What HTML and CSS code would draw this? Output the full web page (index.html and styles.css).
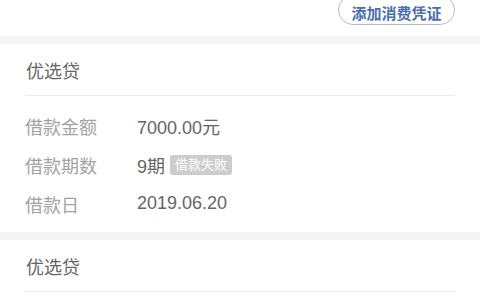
FILE: index.html
```html
<!DOCTYPE html>
<html lang="zh-CN">
<head>
<meta charset="utf-8">
<link rel="stylesheet" href="styles.css">
</head>
<body>
<div class="page">
  <div class="topbar">
    <button class="add-btn">添加消费凭证</button>
  </div>
  <div class="band"></div>
  <section class="card">
    <div class="card-title">优选贷</div>
    <div class="rows">
      <div class="row"><span class="label">借款金额</span><span class="value">7000.00元</span></div>
      <div class="row"><span class="label">借款期数</span><span class="value">9期</span><span class="tag">借款失败</span></div>
      <div class="row"><span class="label">借款日</span><span class="value">2019.06.20</span></div>
    </div>
  </section>
  <div class="band"></div>
  <section class="card">
    <div class="card-title">优选贷</div>
  </section>
</div>
</body>
</html>
```

FILE: styles.css
```css
html, body {
  margin: 0;
  padding: 0;
  background: #ffffff;
}
body {
  font-family: "Liberation Sans", "Noto Sans CJK SC", sans-serif;
  width: 480px;
  height: 300px;
  overflow: hidden;
}
.page {
  display: flex;
  flex-direction: column;
}
.topbar {
  height: 36px;
  display: flex;
  justify-content: flex-end;
  align-items: flex-start;
  padding-right: 25px;
}
.add-btn {
  margin-top: -5px;
  height: 30px;
  width: 117px;
  border: 1px solid #b4bccb;
  border-radius: 15px;
  background: #ffffff;
  color: #4a6db3;
  font-family: "Noto Sans CJK SC", sans-serif;
  font-size: 15px;
  font-weight: 700;
  padding: 4px 0 0;
  display: flex;
  align-items: center;
  justify-content: center;
}
.band {
  height: 8px;
  background: #f5f5f7;
  flex: none;
}
.card {
  padding: 0 25px;
}
.card-title {
  height: 51px;
  display: flex;
  align-items: center;
  font-size: 18px;
  color: #666666;
  border-bottom: 1px solid #ececec;
  padding-left: 1px;
}
.rows {
  padding: 10px 0 9px;
}
.row {
  height: 39px;
  display: flex;
  align-items: center;
  font-size: 18px;
}
.label {
  width: 112px;
  color: #a3a3a3;
}
.value {
  color: #666666;
}
.tag {
  margin-left: 5px;
  height: 20px;
  line-height: 20px;
  padding: 0 5px;
  border-radius: 3px;
  background: #cdcdcd;
  color: #ffffff;
  font-size: 13px;
}
```
